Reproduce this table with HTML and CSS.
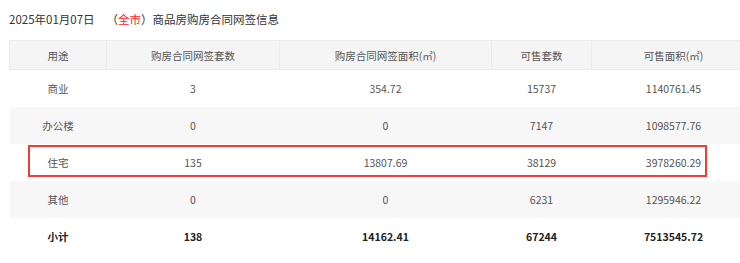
FILE: index.html
```html
<!DOCTYPE html>
<html lang="zh-CN">
<head>
<meta charset="utf-8">
<title>商品房购房合同网签信息</title>
<link rel="stylesheet" href="styles.css">
</head>
<body>
<div class="page">
  <div class="title">2025年01月07日<span class="gap"></span>（<span class="city">全市</span>）商品房购房合同网签信息</div>
  <div class="table-wrap">
    <table class="data">
      <colgroup>
        <col class="c1"><col class="c2"><col class="c3"><col class="c4"><col class="c5">
      </colgroup>
      <thead>
        <tr><th>用途</th><th>购房合同网签套数</th><th>购房合同网签面积(㎡)</th><th>可售套数</th><th>可售面积(㎡)</th></tr>
      </thead>
      <tbody>
        <tr><td>商业</td><td>3</td><td>354.72</td><td>15737</td><td>1140761.45</td></tr>
        <tr class="alt"><td>办公楼</td><td>0</td><td>0</td><td>7147</td><td>1098577.76</td></tr>
        <tr><td>住宅</td><td>135</td><td>13807.69</td><td>38129</td><td>3978260.29</td></tr>
        <tr class="alt"><td>其他</td><td>0</td><td>0</td><td>6231</td><td>1295946.22</td></tr>
        <tr class="total"><td>小计</td><td>138</td><td>14162.41</td><td>67244</td><td>7513545.72</td></tr>
      </tbody>
    </table>
    <div class="highlight"></div>
  </div>
</div>
</body>
</html>
```

FILE: styles.css
```css
html, body {
  margin: 0;
  padding: 0;
  background: #fff;
  overflow: hidden;
}
body {
  font-family: "Noto Sans CJK SC", "Noto Sans", sans-serif;
  color: #333;
}
.page {
  padding-left: 9px;
}
.title {
  margin-top: 8px;
  height: 22px;
  line-height: 22px;
  font-size: 11.5px;
  color: #333;
  margin-bottom: 10px;
  white-space: nowrap;
}
.title .gap {
  display: inline-block;
  width: 12px;
}
.title .city {
  color: #f22;
}
.table-wrap {
  position: relative;
  width: 746px;
}
.data {
  border-collapse: collapse;
  width: 746px;
  table-layout: fixed;
  font-size: 10.5px;
  color: #555;
}
.c1 { width: 97px; }
.c2 { width: 173px; }
.c3 { width: 212px; }
.c4 { width: 100px; }
.c5 { width: 164px; }
.data th {
  height: 28px;
  padding: 0;
  background: #f5f5f5;
  border: 1px solid #ebebeb;
  font-weight: normal;
  text-align: center;
  color: #555;
}
.data td {
  height: 37px;
  padding: 0;
  text-align: center;
}
.data tr.alt td {
  background: #f7f7f7;
}
.data tr.total td {
  font-weight: bold;
  color: #222;
}
.highlight {
  position: absolute;
  left: 19px;
  top: 105px;
  width: 675px;
  height: 28px;
  border: 2px solid #f23a3a;
}
```
